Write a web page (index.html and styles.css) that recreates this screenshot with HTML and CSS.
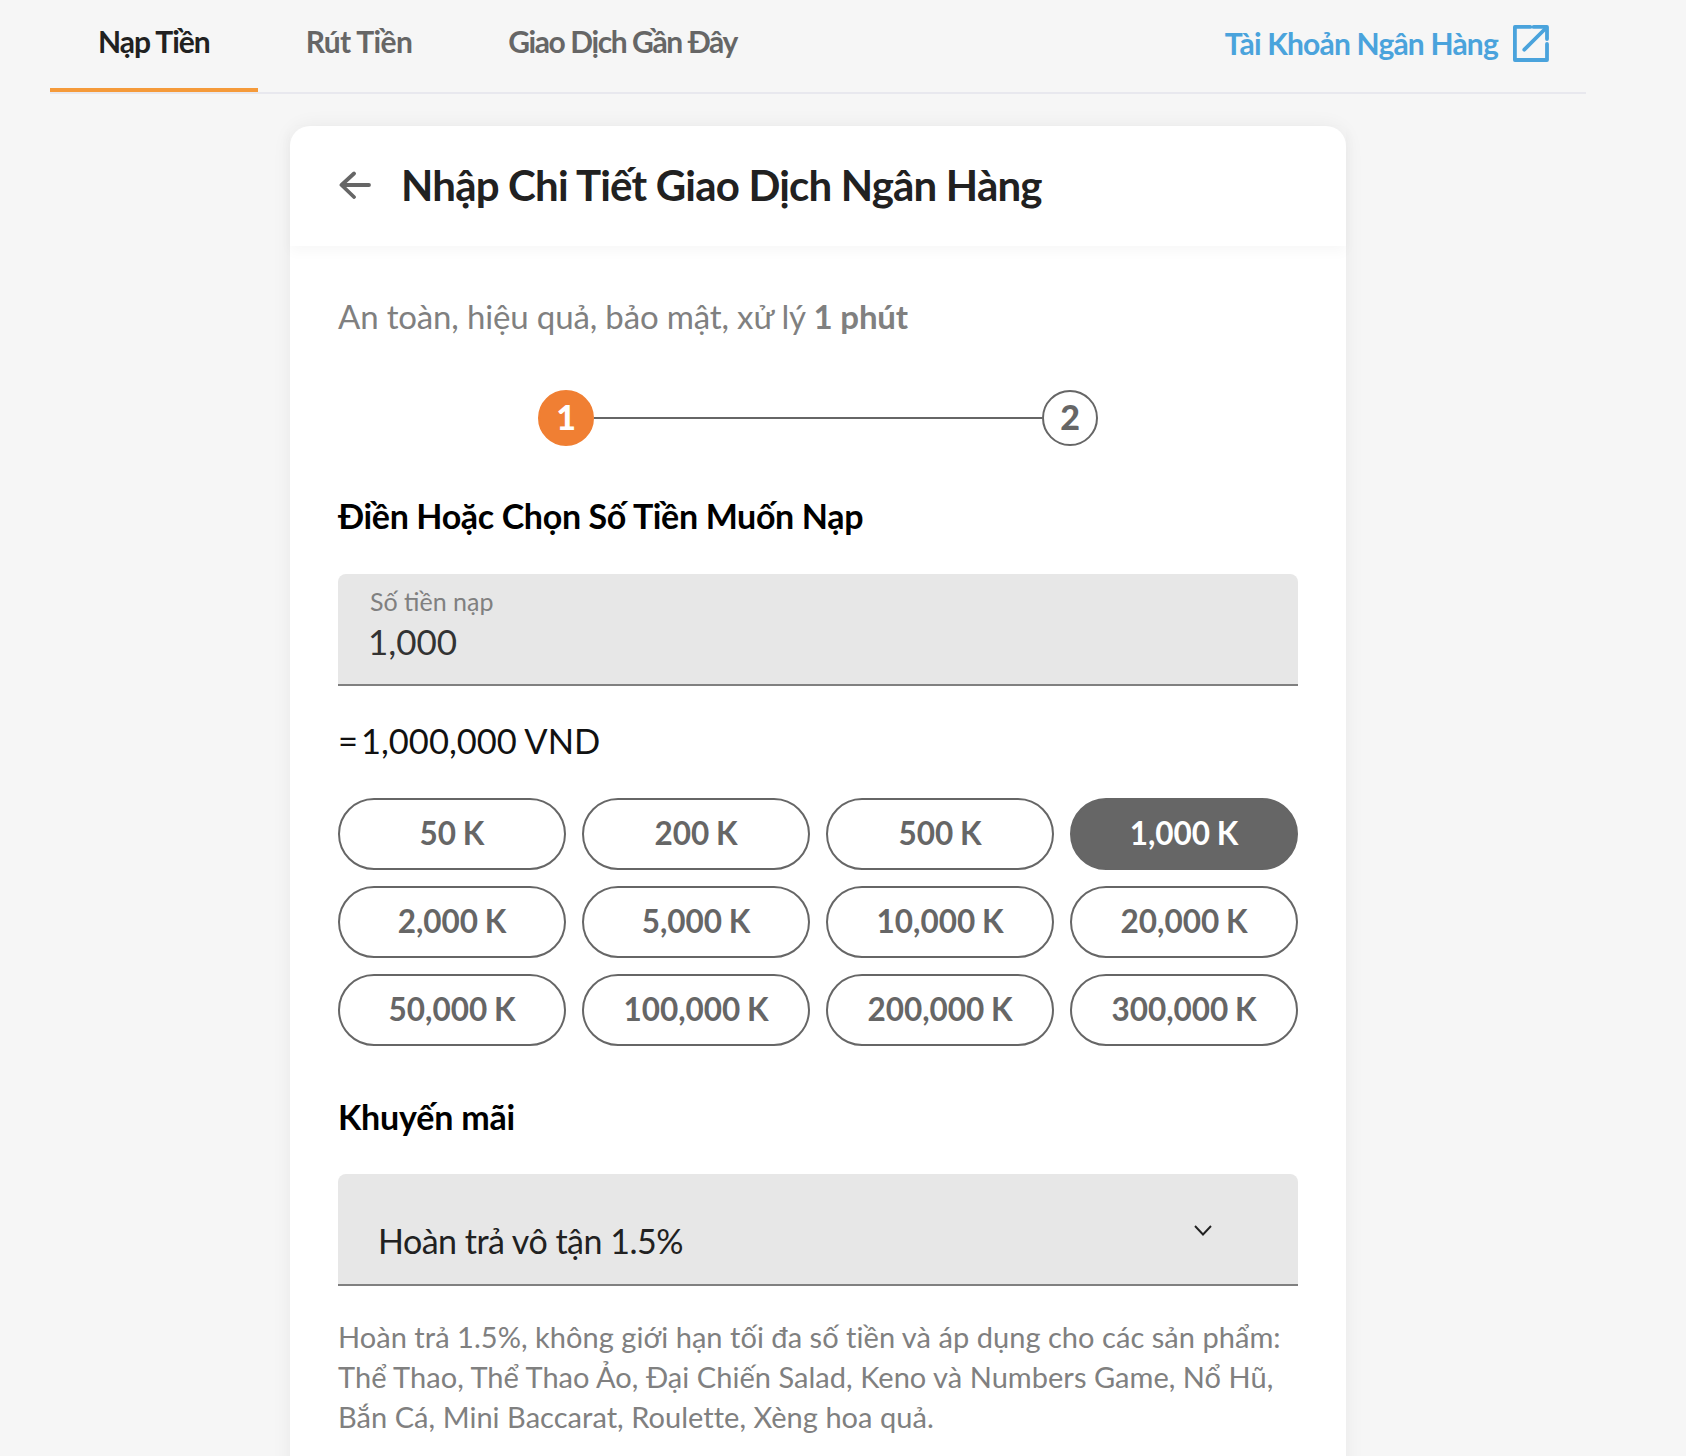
FILE: index.html
```html
<!DOCTYPE html>
<html lang="vi">
<head>
<meta charset="utf-8">
<title>Nạp Tiền</title>
<link rel="stylesheet" href="styles.css">
</head>
<body>
<nav class="tabs">
  <a class="tab tab-active">Nạp Tiền</a>
  <a class="tab">Rút Tiền</a>
  <a class="tab tab-long">Giao Dịch Gần Đây</a>
  <a class="bank-link">Tài Khoản Ngân Hàng
    <svg class="ext-icon" viewBox="0 0 36 37" fill="none" stroke="#4aa3dc" stroke-width="3.8" stroke-linecap="round" stroke-linejoin="round">
      <path d="M17.3 1.9H1.9V35H34V19"/>
      <path d="M20.6 1.9H34V14"/>
      <path d="M11.3 24.7L33 3"/>
    </svg>
  </a>
</nav>
<main class="card">
  <header class="card-head">
    <svg class="back" viewBox="0 0 32 28" fill="none" stroke="#666" stroke-width="3.8" stroke-linecap="round" stroke-linejoin="round">
      <path d="M30 14H3M15 2.5L2.5 14 15 26"/>
    </svg>
    <h1>Nhập Chi Tiết Giao Dịch Ngân Hàng</h1>
  </header>
  <section class="card-body">
    <p class="intro">An toàn, hiệu quả, bảo mật, xử lý <b>1 phút</b></p>
    <div class="stepper">
      <span class="step step-on">1</span>
      <span class="step-line"></span>
      <span class="step">2</span>
    </div>
    <h2>Điền Hoặc Chọn Số Tiền Muốn Nạp</h2>
    <div class="field">
      <span class="field-label">Số tiền nạp</span>
      <span class="field-value">1,000</span>
    </div>
    <p class="equal"><span>=</span><span>1,000,000 VND</span></p>
    <div class="amounts">
      <button class="amount">50 K</button>
      <button class="amount">200 K</button>
      <button class="amount">500 K</button>
      <button class="amount amount-on">1,000 K</button>
      <button class="amount">2,000 K</button>
      <button class="amount">5,000 K</button>
      <button class="amount">10,000 K</button>
      <button class="amount">20,000 K</button>
      <button class="amount">50,000 K</button>
      <button class="amount">100,000 K</button>
      <button class="amount">200,000 K</button>
      <button class="amount">300,000 K</button>
    </div>
    <h2 class="promo-title">Khuyến mãi</h2>
    <div class="select">
      <span>Hoàn trả vô tận 1.5%</span>
      <svg class="chevron" viewBox="0 0 18 11" fill="none" stroke="#222" stroke-width="1.9">
        <path d="M1 1l8 8.5L17 1"/>
      </svg>
    </div>
    <p class="note">Hoàn trả 1.5%, không giới hạn tối đa số tiền và áp dụng cho các sản phẩm: Thể Thao, Thể Thao Ảo, Đại Chiến Salad, Keno và Numbers Game, Nổ Hũ, Bắn Cá, Mini Baccarat, Roulette, Xèng hoa quả.</p>
  </section>
</main>
</body>
</html>
```
FILE: styles.css
```css
* { box-sizing: border-box; }
html, body { height: 1456px; overflow: hidden; }
body {
  margin: 0;
  background: #f6f6f6;
  font-family: "Lato", "Liberation Sans", sans-serif;
  color: #212121;
}
.tabs {
  display: flex;
  align-items: flex-start;
  width: 1536px;
  height: 94px;
  margin-left: 50px;
  padding-right: 37px;
  border-bottom: 2px solid #e8e8ee;
}
.tab {
  height: 92px;
  padding: 23px 48px 0;
  font-size: 30px;
  line-height: 36px;
  font-weight: 700;
  color: #666;
  letter-spacing: -0.65px;
  border-bottom: 4px solid transparent;
}
.tab-active { color: #212121; border-bottom-color: #f59a3a; letter-spacing: -1px; }
.tab-long { letter-spacing: -1.4px; }
.bank-link {
  margin-left: auto;
  margin-top: 25px;
  display: flex;
  align-items: flex-start;
  gap: 15px;
  font-size: 30px;
  line-height: 36px;
  font-weight: 700;
  color: #4aa3dc;
  letter-spacing: -0.8px;
}
.ext-icon { width: 36px; height: 37px; }
.card {
  width: 1056px;
  margin: 32px 0 0 290px;
  height: 1400px;
  background: #fff;
  border-radius: 20px 20px 0 0;
  box-shadow: 0 0 20px rgba(0, 0, 0, 0.06);
}
.card-head {
  height: 120px;
  display: flex;
  align-items: center;
  gap: 30px;
  padding: 0 0 3px 49px;
  box-shadow: 0 6px 12px rgba(0, 0, 0, 0.03);
}
.back { width: 32px; height: 28px; }
h1 { margin: 0; font-size: 42px; line-height: 50px; font-weight: 700; letter-spacing: -0.8px; }
.card-body { padding: 50px 48px 0; }
.intro { margin: 0; font-size: 33px; line-height: 40px; color: #808080; letter-spacing: -0.15px; }
.stepper {
  display: flex;
  align-items: center;
  justify-content: center;
  margin-top: 54px;
}
.step {
  width: 56px;
  height: 56px;
  padding-bottom: 4px;
  border: 2px solid #666;
  border-radius: 50%;
  display: flex;
  align-items: center;
  justify-content: center;
  font-size: 34px;
  font-weight: 900;
  color: #666;
}
.step-on { background: #f07f33; border-color: #f07f33; color: #fff; }
.step-line { width: 448px; height: 2px; background: #666; }
h2 { margin: 50px 0 0; font-size: 34px; line-height: 40px; font-weight: 700; color: #000; letter-spacing: -0.35px; }
.field {
  height: 112px;
  margin-top: 38px;
  padding: 11px 30px 0;
  background: #e7e7e7;
  border-bottom: 2px solid #808080;
  border-radius: 8px 8px 0 0;
  display: flex;
  flex-direction: column;
}
.field-label { padding-left: 2px; font-size: 25px; line-height: 32px; color: #808080; }
.field-value { margin-top: 4px; font-size: 35px; line-height: 40px; color: #333; }
.equal { display: flex; gap: 3px; margin: 35px 0 0; font-size: 34.5px; line-height: 40px; color: #111; }
.amounts {
  margin-top: 37px;
  display: grid;
  grid-template-columns: repeat(4, 1fr);
  gap: 16px;
}
.amount {
  height: 72px;
  padding: 0 0 2px;
  border: 2px solid #666;
  border-radius: 36px;
  background: #fff;
  font-family: inherit;
  font-size: 31.5px;
  font-weight: 700;
  word-spacing: -1px;
  color: #666;
}
.amount-on { background: #666; color: #fff; }
h2.promo-title { margin-top: 51px; letter-spacing: -0.2px; }
.select {
  height: 112px;
  margin-top: 37px;
  padding: 47px 0 0 40px;
  background: #e7e7e7;
  border-bottom: 2px solid #808080;
  border-radius: 8px 8px 0 0;
  position: relative;
  font-size: 34px;
  line-height: 40px;
  letter-spacing: -0.5px;
  color: #212121;
}
.chevron { position: absolute; right: 86px; top: 51px; width: 18px; height: 11px; }
.note { margin: 31px 0 0; font-size: 29px; line-height: 40px; color: #808080; letter-spacing: 0.04px; }
```
